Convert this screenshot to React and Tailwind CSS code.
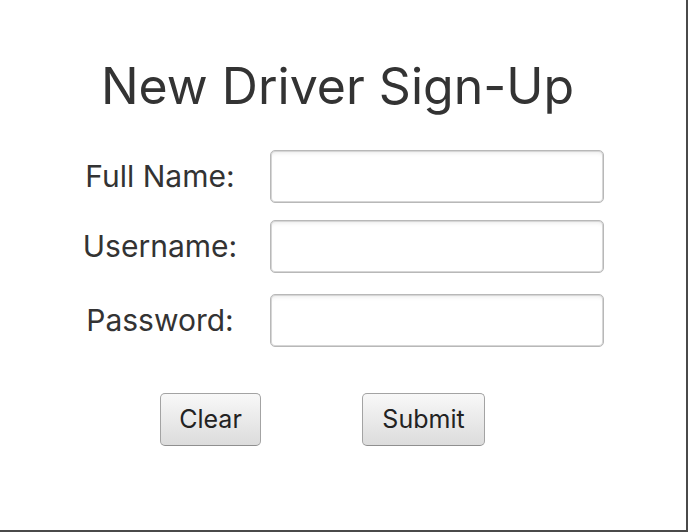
import React, { useState } from "react";

const fields = [
  { label: "Full Name:", type: "text", mt: "mt-0" },
  { label: "Username:", type: "text", mt: "mt-[17px]" },
  { label: "Password:", type: "password", mt: "mt-[21px]" },
];

const App = () => {
  const [values, setValues] = useState(["", "", ""]);

  const setValue = (i, v) => {
    const next = [...values];
    next[i] = v;
    setValues(next);
  };

  return (
    <div
      className="w-[688px] h-[532px] bg-white border-r-2 border-b-2 border-[#4a4a4a] text-[#333333]"
      style={{ fontFamily: "Inter, 'Liberation Sans', sans-serif" }}
    >
      <h1 className="pt-[56px] pr-[11px] text-center text-[50px] leading-[60px] font-normal">
        New Driver Sign-Up
      </h1>

      <form className="mt-[34px]" onSubmit={(e) => e.preventDefault()}>
        {fields.map((f, i) => (
          <div key={f.label} className={`flex items-center ${f.mt}`}>
            <label className="w-[200px] ml-[60px] text-center text-[30px] leading-[53px]">
              {f.label}
            </label>
            <input
              type={f.type}
              value={values[i]}
              onChange={(e) => setValue(i, e.target.value)}
              className="ml-[10px] w-[334px] h-[53px] rounded-[5px] bg-white border border-[#b8b8b8] shadow-[inset_0_0_0_1px_#d6d6d6,inset_0_4px_5px_-3px_rgba(0,0,0,0.12)] outline-none px-3 text-[22px]"
            />
          </div>
        ))}

        <div className="flex mt-[46px] pl-[160px] gap-[101px]">
          <button
            type="button"
            onClick={() => setValues(["", "", ""])}
            className="w-[101px] h-[53px] rounded-[5px] border border-[#a3a3a3] border-b-[#8f8f8f] bg-gradient-to-b from-[#f8f8f8] to-[#dcdcdc] text-[25px] text-[#222222]"
          >
            Clear
          </button>
          <button
            type="submit"
            className="w-[123px] h-[53px] rounded-[5px] border border-[#a3a3a3] border-b-[#8f8f8f] bg-gradient-to-b from-[#f8f8f8] to-[#dcdcdc] text-[25px] text-[#222222]"
          >
            Submit
          </button>
        </div>
      </form>
    </div>
  );
};

export default App;
